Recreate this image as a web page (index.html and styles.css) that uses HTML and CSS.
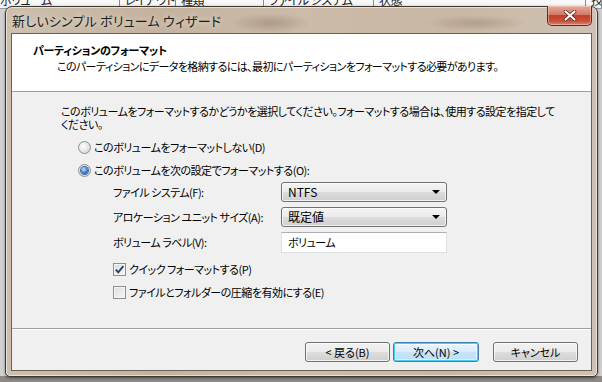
FILE: index.html
```html
<!DOCTYPE html>
<html lang="ja">
<head>
    <meta charset="UTF-8">
    <title>新しいシンプル ボリューム ウィザード</title>
    <link rel="stylesheet" href="styles.css">
</head>
<body>
<div class="list-head">
    <span class="col-vol">ボリューム</span>
    <span class="col-layout">レイアウト</span>
    <span class="col-type">種類</span>
    <span class="col-fs">ファイル システム</span>
    <span class="col-state">状態</span>
    <span class="col-more">技</span>
</div>

<div class="window">
    <div class="titlebar">
        <span class="title">新しいシンプル ボリューム ウィザード</span>
        <button class="close" aria-label="閉じる">
            <svg width="14" height="11" viewBox="0 0 14 11">
                <path d="M2.5 1.5 L11.5 9.5 M11.5 1.5 L2.5 9.5" stroke="#5b1c12" stroke-width="3.6" stroke-linecap="round"/>
                <path d="M2.5 1.5 L11.5 9.5 M11.5 1.5 L2.5 9.5" stroke="#fff" stroke-width="2.2" stroke-linecap="round"/>
            </svg>
        </button>
    </div>

    <div class="client">
        <div class="header">
            <div class="header-title">パーティションのフォーマット</div>
            <div class="header-sub">このパーティションにデータを格納するには、最初にパーティションをフォーマットする必要があります。</div>
        </div>

        <div class="content">
            <p class="intro">このボリュームをフォーマットするかどうかを選択してください。フォーマットする場合は、使用する設定を指定して<br>ください。</p>

            <label class="option">
                <span class="radio"></span>このボリュームをフォーマットしない(D)
            </label>
            <label class="option">
                <span class="radio on"></span>このボリュームを次の設定でフォーマットする(O):
            </label>

            <div class="settings">
                <span class="field-label">ファイル システム(F):</span>
                <div class="combo">NTFS<span class="arrow"></span></div>

                <span class="field-label">アロケーション ユニット サイズ(A):</span>
                <div class="combo">既定値<span class="arrow"></span></div>

                <span class="field-label">ボリューム ラベル(V):</span>
                <div class="textbox">ボリューム</div>
            </div>

            <div class="checks">
                <label class="check-row">
                    <span class="checkbox">
                        <svg width="11" height="11" viewBox="0 0 11 11">
                            <path d="M1.8 5.6 L4.3 8.4 L9.3 2.2" fill="none" stroke="#27436e" stroke-width="1.9"/>
                        </svg>
                    </span>クイック フォーマットする(P)
                </label>
                <label class="check-row">
                    <span class="checkbox"></span>ファイルとフォルダーの圧縮を有効にする(E)
                </label>
            </div>
        </div>

        <div class="footer">
            <button class="btn">&lt; 戻る(B)</button>
            <button class="btn default">次へ(N) &gt;</button>
            <button class="btn cancel">キャンセル</button>
        </div>
    </div>
</div>
</body>
</html>
```

FILE: styles.css
```css
* {
    box-sizing: border-box;
}
html, body {
    margin: 0;
}
body {
    width: 602px;
    height: 382px;
    overflow: hidden;
    position: relative;
    background:
        linear-gradient(transparent 376px, #8d8a86 376px),
        linear-gradient(90deg, #cfcfcf, #e6e6e6 2%, #e6e6e6 98%, #cdcdcd);
    font-family: "Noto Sans CJK JP", sans-serif;
    font-feature-settings: "palt" 1;
    font-size: 11px;
    letter-spacing: -0.5px;
    color: #000;
}

/* list behind the wizard */
.list-head {
    display: flex;
    height: 18px;
    margin-top: -9px;
    background: linear-gradient(#fff, #f3f3f3);
    border-bottom: 1px solid #9a9a9a;
    line-height: 18px;
    font-size: 12px;
    color: #222;
}
.list-head span {
    padding: 0 5px;
    border-right: 1px solid #8a8a8a;
    white-space: nowrap;
    overflow: hidden;
}
.col-vol { width: 120px; padding-left: 0 !important; }
.col-layout { width: 56px; }
.col-type { width: 88px; }
.col-fs { width: 110px; }
.col-state { width: 212px; }
.col-more { flex: 1; }

/* window */
.window {
    position: absolute;
    left: 5px;
    top: 6px;
    width: 593px;
    height: 371px;
    display: flex;
    flex-direction: column;
    padding: 0 5px 5px;
    border: 1px solid #3e3830;
    border-radius: 7px 7px 5px 5px;
    background:
        radial-gradient(ellipse 40px 10px at 265px 16px, rgba(120, 100, 80, .35), transparent),
        radial-gradient(ellipse 50px 8px at 470px 16px, rgba(120, 100, 80, .3), transparent),
        linear-gradient(90deg, #cdbfae, #c4b29d 25%, #cbbba8 50%, #c8b7a3 75%, #cfc2b4);
    box-shadow: inset 0 0 0 1px rgba(255, 255, 255, .55), 0 1px 3px rgba(0, 0, 0, .5);
}
.titlebar {
    height: 26px;
    display: flex;
    justify-content: space-between;
    align-items: center;
    padding-left: 1px;
}
.title {
    font-size: 13px;
    letter-spacing: 0.2px;
    color: #1c1c1c;
    text-shadow: 0 0 6px rgba(255, 255, 255, .8);
}
.close {
    align-self: flex-start;
    margin-top: -1px;
    width: 45px;
    height: 20px;
    padding: 0;
    display: flex;
    align-items: center;
    justify-content: center;
    border: 1px solid #5a2b22;
    border-top: 0;
    border-radius: 0 0 5px 5px;
    background: linear-gradient(#e4a99c, #d47a67 45%, #c2402c 50%, #c9513b 80%, #dc8670);
    box-shadow: inset 0 0 0 1px rgba(255, 220, 210, .45);
}

.client {
    flex: 1;
    display: flex;
    flex-direction: column;
    border: 1px solid #6a6156;
    background: #f0f0f0;
}
.header {
    height: 58px;
    padding: 9px 0 0 21px;
    background: #fff;
    border-bottom: 1px solid #a0a0a0;
}
.header-title {
    font-weight: bold;
    letter-spacing: -0.3px;
    line-height: 15px;
}
.header-sub {
    line-height: 17px;
    padding-left: 24px;
    letter-spacing: -0.6px;
}

.content {
    flex: 1;
    padding: 13px 0 0 49px;
}
.intro {
    margin: 0 0 6px;
    line-height: 13px;
}
.option {
    display: flex;
    align-items: center;
    height: 20px;
    margin-top: 3px;
    margin-left: 17px;
}
.radio {
    position: relative;
    width: 13px;
    height: 13px;
    margin-right: 3px;
    border-radius: 50%;
    border: 1px solid #8d8f91;
    background: radial-gradient(circle at 40% 40%, #fff, #d8d9da 75%, #eaeaea);
}
.radio.on::after {
    content: "";
    position: absolute;
    left: 2px;
    top: 2px;
    width: 7px;
    height: 7px;
    border-radius: 50%;
    background: radial-gradient(circle at 40% 35%, #c9e2fb, #3a79c9 55%, #1c4f91);
    box-shadow: 0 0 0 1px #47679a;
}

.settings {
    display: grid;
    grid-template-columns: 168px 166px;
    grid-auto-rows: 20px;
    row-gap: 5px;
    margin: 2px 0 0 52px;
    align-items: center;
}
.field-label {
    white-space: nowrap;
}
.combo {
    position: relative;
    height: 20px;
    padding-left: 6px;
    line-height: 18px;
    font-size: 12px;
    letter-spacing: 0;
    border: 1px solid #707070;
    border-radius: 3px;
    background: linear-gradient(#f4f4f4, #ebebeb 48%, #dcdcdc 52%, #cfcfcf);
    box-shadow: inset 0 0 0 1px rgba(255, 255, 255, .7);
}
.arrow {
    position: absolute;
    right: 6px;
    top: 7px;
    border-left: 4px solid transparent;
    border-right: 4px solid transparent;
    border-top: 4px solid #000;
}
.textbox {
    height: 21px;
    padding-left: 6px;
    line-height: 19px;
    background: #fff;
    border: 1px solid #dcdfe3;
    border-top-color: #abadb3;
}

.checks {
    margin: 8px 0 0 52px;
    display: flex;
    flex-direction: column;
    gap: 5px;
}
.check-row {
    display: flex;
    align-items: center;
    height: 18px;
}
.checkbox {
    width: 13px;
    height: 13px;
    margin-right: 3px;
    display: flex;
    align-items: center;
    justify-content: center;
    border: 1px solid #8e8f8f;
    background: linear-gradient(135deg, #dcdcdc, #f7f7f7);
    box-shadow: inset 0 0 0 1px #f4f4f4;
}

.footer {
    height: 42px;
    display: flex;
    justify-content: flex-end;
    align-items: flex-start;
    padding: 13px 13px 0 0;
    border-top: 1px solid #a0a0a0;
    box-shadow: inset 0 1px 0 #fff;
}
.btn {
    width: 85px;
    height: 20px;
    margin-left: 3px;
    padding: 0;
    font: inherit;
    line-height: 18px;
    color: #000;
    border: 1px solid #707070;
    border-radius: 3px;
    background: linear-gradient(#f2f2f2, #ebebeb 48%, #dddddd 52%, #cfcfcf);
    box-shadow: inset 0 0 0 1px rgba(255, 255, 255, .75);
}
.btn.default {
    width: 86px;
    border-color: #3c7fb1;
    background: linear-gradient(#ecf6fc, #dcecfb 48%, #c7e3f8 52%, #bde0f5);
    box-shadow: inset 0 0 0 1px #4ad0f0, inset 0 0 0 2px rgba(255, 255, 255, .5);
}
.btn.cancel {
    margin-left: 14px;
}
```
